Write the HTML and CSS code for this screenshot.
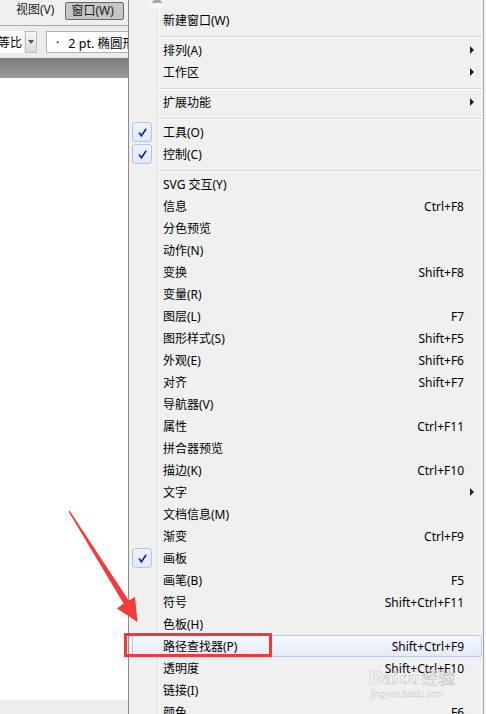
FILE: index.html
```html
<!DOCTYPE html>
<html lang="zh">
<head>
<meta charset="utf-8">
<title>窗口菜单</title>
<link rel="stylesheet" href="styles.css">
</head>
<body>
<div class="screen">
  <div class="app">
    <div class="menubar">
      <span class="mb-item">视图(V)</span>
      <span class="mb-item active">窗口(W)</span>
    </div>
    <div class="controlbar">
      <div class="combo"><span class="combo-text">等比</span></div>
      <div class="combo-btn"><span class="caret"></span></div>
      <div class="field"><span class="dot">·</span><span>2 pt. 椭圆形</span></div>
    </div>
    <div class="tabband"></div>
    <div class="canvas"></div>
    <div class="statusbar"></div>
  </div>

  <div class="menu">
    <div class="scroll-up"><div class="up-box"><span class="up-tri"></span></div></div>
    <div class="items">
      <div class="row"><span class="ck"></span><span class="label">新建窗口(W)</span></div>
      <div class="sep"></div>
      <div class="row"><span class="ck"></span><span class="label">排列(A)</span><span class="sub"></span></div>
      <div class="row"><span class="ck"></span><span class="label">工作区</span><span class="sub"></span></div>
      <div class="sep"></div>
      <div class="row"><span class="ck"></span><span class="label">扩展功能</span><span class="sub"></span></div>
      <div class="sep"></div>
      <div class="row"><span class="ck"><span class="check"><svg width="9" height="9" viewBox="0 0 9 9"><path d="M1 4.6 L3.4 7.8 L8.2 0.8" fill="none" stroke="#1d2a8c" stroke-width="1.7"/></svg></span></span><span class="label">工具(O)</span></div>
      <div class="row"><span class="ck"><span class="check"><svg width="9" height="9" viewBox="0 0 9 9"><path d="M1 4.6 L3.4 7.8 L8.2 0.8" fill="none" stroke="#1d2a8c" stroke-width="1.7"/></svg></span></span><span class="label">控制(C)</span></div>
      <div class="sep"></div>
      <div class="row"><span class="ck"></span><span class="label">SVG 交互(Y)</span></div>
      <div class="row"><span class="ck"></span><span class="label">信息</span><span class="key">Ctrl+F8</span></div>
      <div class="row"><span class="ck"></span><span class="label">分色预览</span></div>
      <div class="row"><span class="ck"></span><span class="label">动作(N)</span></div>
      <div class="row"><span class="ck"></span><span class="label">变换</span><span class="key">Shift+F8</span></div>
      <div class="row"><span class="ck"></span><span class="label">变量(R)</span></div>
      <div class="row"><span class="ck"></span><span class="label">图层(L)</span><span class="key">F7</span></div>
      <div class="row"><span class="ck"></span><span class="label">图形样式(S)</span><span class="key">Shift+F5</span></div>
      <div class="row"><span class="ck"></span><span class="label">外观(E)</span><span class="key">Shift+F6</span></div>
      <div class="row"><span class="ck"></span><span class="label">对齐</span><span class="key">Shift+F7</span></div>
      <div class="row"><span class="ck"></span><span class="label">导航器(V)</span></div>
      <div class="row"><span class="ck"></span><span class="label">属性</span><span class="key">Ctrl+F11</span></div>
      <div class="row"><span class="ck"></span><span class="label">拼合器预览</span></div>
      <div class="row"><span class="ck"></span><span class="label">描边(K)</span><span class="key">Ctrl+F10</span></div>
      <div class="row"><span class="ck"></span><span class="label">文字</span><span class="sub"></span></div>
      <div class="row"><span class="ck"></span><span class="label">文档信息(M)</span></div>
      <div class="row"><span class="ck"></span><span class="label">渐变</span><span class="key">Ctrl+F9</span></div>
      <div class="row"><span class="ck"><span class="check"><svg width="9" height="9" viewBox="0 0 9 9"><path d="M1 4.6 L3.4 7.8 L8.2 0.8" fill="none" stroke="#1d2a8c" stroke-width="1.7"/></svg></span></span><span class="label">画板</span></div>
      <div class="row"><span class="ck"></span><span class="label">画笔(B)</span><span class="key">F5</span></div>
      <div class="row"><span class="ck"></span><span class="label">符号</span><span class="key">Shift+Ctrl+F11</span></div>
      <div class="row"><span class="ck"></span><span class="label">色板(H)</span></div>
      <div class="row hl"><span class="ck"></span><span class="label">路径查找器(P)</span><span class="key">Shift+Ctrl+F9</span></div>
      <div class="row"><span class="ck"></span><span class="label">透明度</span><span class="key">Shift+Ctrl+F10</span></div>
      <div class="row"><span class="ck"></span><span class="label">链接(I)</span></div>
      <div class="row"><span class="ck"></span><span class="label">颜色</span><span class="key">F6</span></div>
    </div>
  </div>
  <div class="edge"></div>

  <svg class="annot" width="486" height="714" viewBox="0 0 486 714">
    <polygon points="69.5,510.5 128.8,600.5 135,597 137.5,622 117,608.5 123.5,603.5 68.5,511.5" fill="#f03c3c"/>
    <rect x="125.5" y="634.5" width="145" height="21" fill="none" stroke="#f03a3a" stroke-width="3"/>
  </svg>

  <div class="wm">
    <div class="wm-main"><span>Bai</span><span class="wm-du">du</span><span class="wm-cn">经验</span></div>
    <div class="wm-url">jingyan.baidu.com</div>
  </div>
</div>
</body>
</html>
```

FILE: styles.css
```css
* { box-sizing: border-box; margin: 0; padding: 0; }
html, body { width: 486px; height: 714px; overflow: hidden; }
body {
  font-family: "Noto Sans", "Noto Sans CJK SC", sans-serif;
  font-size: 12px;
  color: #000;
  background: #f0f0f0;
}
.screen {
  position: relative;
  display: flex;
  width: 486px;
  height: 714px;
  overflow: hidden;
}

/* background application */
.app {
  flex: none;
  width: 128px;
  display: flex;
  flex-direction: column;
  overflow: hidden;
}
.menubar {
  flex: none;
  height: 26px;
  background: #f0f0f0;
  border-bottom: 1px solid #a9a9a9;
  display: flex;
  align-items: flex-start;
  padding: 2px 0 0 16px;
  white-space: nowrap;
}
.mb-item {
  height: 18px;
  line-height: 16px;
  color: #222;
}
.mb-item.active {
  flex: none;
  margin-left: 11px;
  width: 59px;
  padding-left: 5px;
  border: 1px solid #6a6a6a;
  border-radius: 2px;
  background: #c6c6c6;
}
.controlbar {
  flex: none;
  height: 32px;
  background: #ececec;
  display: flex;
  align-items: center;
}
.combo {
  flex: none;
  width: 24px;
  height: 22px;
  background: #fff;
  display: flex;
  align-items: center;
  overflow: hidden;
}
.combo-text { margin-left: -2px; white-space: nowrap; }
.combo-btn {
  flex: none;
  width: 12px;
  height: 22px;
  margin-left: 1px;
  background: linear-gradient(#f6f6f6, #dadada);
  border: 1px solid #bdbdbd;
  display: flex;
  align-items: center;
  justify-content: center;
}
.caret {
  border-top: 4px solid #555;
  border-left: 3px solid transparent;
  border-right: 3px solid transparent;
}
.field {
  flex: none;
  width: 110px;
  height: 22px;
  margin-left: 9px;
  background: #fff;
  border: 1px solid #b3b3b3;
  display: flex;
  align-items: center;
  padding-left: 9px;
  white-space: nowrap;
  font-size: 12.5px;
}
.dot { margin-right: 9px; }
.tabband {
  flex: none;
  height: 20px;
  background: linear-gradient(#7e7e7e, #999);
}
.canvas { flex: 1; background: #fff; }
.statusbar { flex: none; height: 14px; background: #ededed; }

/* popup menu */
.menu {
  flex: none;
  width: 356px;
  background: #f0f0f0;
  border-left: 1px solid #8c8c8c;
  border-right: 1px solid #a3a3a3;
  display: flex;
  flex-direction: column;
}
.edge { flex: 1; background: #f6f6f6; }
.scroll-up {
  flex: none;
  height: 9px;
  padding-left: 21px;
}
.up-box {
  width: 14px;
  height: 8px;
  background: #f7f7f7;
  display: flex;
  justify-content: center;
  overflow: hidden;
}
.up-tri {
  height: 0;
  margin-top: -3px;
  border-bottom: 6px solid #a8a8a8;
  border-left: 6px solid transparent;
  border-right: 6px solid transparent;
}
.items {
  background: linear-gradient(to right,
    transparent 28px, #e0e1e1 28px, #e0e1e1 29px,
    #fff 29px, #fff 30px, transparent 30px);
}
.row {
  display: flex;
  align-items: center;
  height: 22px;
  white-space: nowrap;
}
.ck {
  flex: none;
  width: 34px;
  height: 100%;
  display: flex;
  align-items: center;
  padding-left: 3px;
}
.check {
  width: 20px;
  height: 20px;
  border: 1px solid #b0c6e8;
  border-radius: 3px;
  background: linear-gradient(#edf2fb, #e0e9f7);
  display: flex;
  align-items: center;
  justify-content: center;
}
.label { flex: 1; }
.key { margin-right: 19px; }
.sub {
  margin-right: 9px;
  width: 0;
  height: 0;
  border-left: 4px solid #222;
  border-top: 4px solid transparent;
  border-bottom: 4px solid transparent;
}
.sep {
  height: 0;
  margin: 5px 1px 1px 30px;
  border-top: 1px solid #d7d7d7;
  border-bottom: 1px solid #fff;
}
.row.hl {
  margin: 0 1px 0 3px;
  border: 1px solid #b6cde9;
  border-radius: 3px;
  background: linear-gradient(#f5f8fc, #e3ebf6);
}
.row.hl .ck { width: 30px; }
.row.hl .key { margin-right: 17px; }

/* overlays */
.annot {
  position: absolute;
  left: 0;
  top: 0;
  pointer-events: none;
}
.wm {
  position: absolute;
  left: 369px;
  top: 667px;
  pointer-events: none;
  color: rgba(255, 255, 255, 0.65);
  -webkit-text-stroke: 0.6px rgba(140, 140, 140, 0.5);
}
.wm-main {
  display: flex;
  align-items: baseline;
  font: bold 19px/20px "Liberation Sans", sans-serif;
}
.wm-du { font-size: 16px; margin-left: 1px; }
.wm-cn {
  font-family: "Noto Sans CJK SC", sans-serif;
  font-weight: normal;
  font-size: 17px;
  margin-left: 2px;
}
.wm-url {
  font: 9px/10px "Liberation Sans", sans-serif;
  -webkit-text-stroke: 0.3px rgba(140, 140, 140, 0.5);
  margin-left: 2px;
}
```
